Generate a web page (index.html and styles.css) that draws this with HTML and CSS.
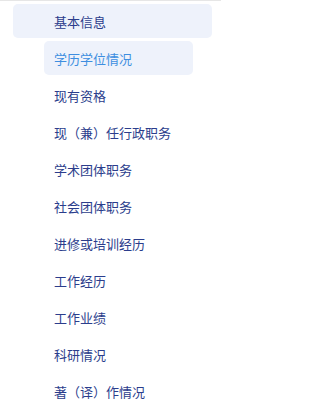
FILE: index.html
```html
<!DOCTYPE html>
<html lang="zh-CN">
<head>
<meta charset="utf-8">
<link rel="stylesheet" href="styles.css">
</head>
<body>
<nav class="menu">
  <div class="item parent">基本信息</div>
  <div class="item child active">学历学位情况</div>
  <div class="item">现有资格</div>
  <div class="item">现（兼）任行政职务</div>
  <div class="item">学术团体职务</div>
  <div class="item">社会团体职务</div>
  <div class="item">进修或培训经历</div>
  <div class="item">工作经历</div>
  <div class="item">工作业绩</div>
  <div class="item">科研情况</div>
  <div class="item">著（译）作情况</div>
</nav>
</body>
</html>
```
FILE: styles.css
```css
html, body {
  margin: 0;
  padding: 0;
  background: #ffffff;
}
body {
  width: 221px;
  height: 406px;
  overflow: hidden;
  border-top: 1px solid #e6e6e6;
  box-sizing: border-box;
  font-family: "Noto Sans CJK SC", "Noto Sans", sans-serif;
}
.menu {
  display: flex;
  flex-direction: column;
  gap: 3.1px;
  padding: 3px 9px 0 13px;
}
.item {
  height: 34px;
  display: flex;
  align-items: center;
  padding-left: 41px;
  font-size: 13px;
  color: #2b3d8c;
  border-radius: 5px;
}
.parent {
  background: #eef2fb;
}
.child {
  margin-left: 31px;
  margin-right: 19px;
  padding-left: 10px;
}
.active {
  background: #eef2fb;
  color: #3d8ee0;
}
```
